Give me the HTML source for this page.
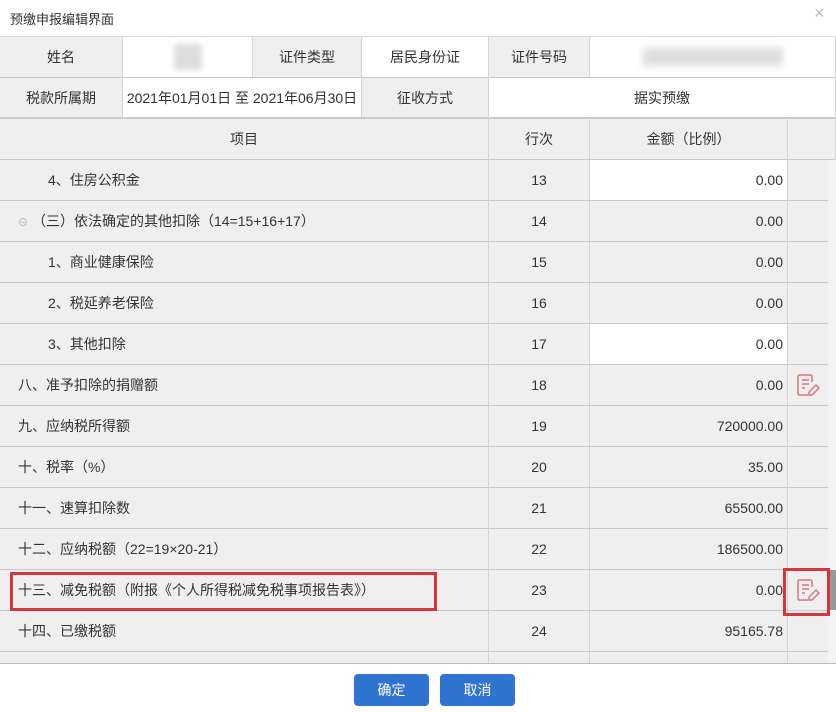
<!DOCTYPE html><html><head><meta charset="utf-8"><style>
body{margin:0;width:836px;height:712px;background:#fff;font-family:"Liberation Sans","Noto Sans CJK SC",sans-serif;font-size:14px;color:#333;position:relative;overflow:hidden}
.c{position:absolute;box-sizing:border-box;display:flex;align-items:center;justify-content:center;border-right:1px solid #d4d4d4;border-bottom:1px solid #c8c8c8;background:#efefef;white-space:nowrap}
.w{background:#fff}
.l{justify-content:flex-start}
.r{justify-content:flex-end;padding-right:4px}
.btn{position:absolute;top:674px;height:32px;width:75px;background:#2f74d0;color:#fff;border-radius:4px;display:flex;align-items:center;justify-content:center;font-size:14px}
.o{font-size:10px;color:#aaa;margin-right:4px}
</style></head><body>
<div style="position:absolute;left:10px;top:9px;font-size:13px">预缴申报编辑界面</div>
<div style="position:absolute;left:814px;top:3px;font-size:18px;color:#bbb">×</div>
<div style="position:absolute;left:0;top:36px;width:836px;border-top:1px solid #ddd"></div>
<div class="c" style="left:0;top:37px;width:123px;height:41px">姓名</div>
<div class="c w" style="left:123px;top:37px;width:130px;height:41px"><div style="width:28px;height:26px;background:#ddd;filter:blur(3px)"></div></div>
<div class="c" style="left:253px;top:37px;width:109px;height:41px">证件类型</div>
<div class="c w" style="left:362px;top:37px;width:127px;height:41px">居民身份证</div>
<div class="c" style="left:489px;top:37px;width:101px;height:41px">证件号码</div>
<div class="c w" style="left:590px;top:37px;width:246px;height:41px"><div style="width:140px;height:18px;background:#ddd;filter:blur(4px)"></div></div>
<div class="c" style="left:0;top:78px;width:123px;height:40px">税款所属期</div>
<div class="c w" style="left:123px;top:78px;width:239px;height:40px">2021年01月01日 至 2021年06月30日</div>
<div class="c" style="left:362px;top:78px;width:127px;height:40px">征收方式</div>
<div class="c w" style="left:489px;top:78px;width:347px;height:40px">据实预缴</div>
<div class="c" style="left:0;top:118px;width:489px;height:42px;border-top:1px solid #ccc">项目</div>
<div class="c" style="left:489px;top:118px;width:101px;height:42px;border-top:1px solid #ccc">行次</div>
<div class="c" style="left:590px;top:118px;width:198px;height:42px;border-top:1px solid #ccc">金额（比例）</div>
<div class="c" style="left:788px;top:118px;width:48px;height:42px;border-top:1px solid #ccc"></div>
<div id="rows"></div>
<script>
var d=[["4、住房公积金",13,"0.00",48,1],["<span class=o>⊖</span>（三）依法确定的其他扣除（14=15+16+17）",14,"0.00",18,0],["1、商业健康保险",15,"0.00",48,0],["2、税延养老保险",16,"0.00",48,0],["3、其他扣除",17,"0.00",48,1],["八、准予扣除的捐赠额",18,"0.00",18,0,1],["九、应纳税所得额",19,"720000.00",18,0],["十、税率（%）",20,"35.00",18,0],["十一、速算扣除数",21,"65500.00",18,0],["十二、应纳税额（22=19×20-21）",22,"186500.00",18,0],["十三、减免税额（附报《个人所得税减免税事项报告表》）",23,"0.00",18,0,1],["十四、已缴税额",24,"95165.78",18,0],["",'',"",18,0]];
var ic='<svg width="26" height="26" viewBox="0 0 26 26" fill="none" stroke="#d9777a" stroke-width="1.5"><path d="M17 10V4.5a1.5 1.5 0 0 0-1.5-1.5h-11A1.5 1.5 0 0 0 3 4.5v17A1.5 1.5 0 0 0 4.5 23H13M7 8h7M7 12h7M7 16h3"/><path d="M21 13l3 3-7 7h-3v-3z"/></svg>';
var h='';d.forEach(function(r,i){var t=160+i*41,hh=i==12?12:41;
h+='<div class="c l" style="left:0;top:'+t+'px;width:489px;height:'+hh+'px;padding-left:'+r[3]+'px">'+r[0]+'</div>';
h+='<div class="c" style="left:489px;top:'+t+'px;width:101px;height:'+hh+'px">'+r[1]+'</div>';
h+='<div class="c r'+(r[4]?' w':'')+'" style="left:590px;top:'+t+'px;width:198px;height:'+hh+'px">'+r[2]+'</div>';
h+='<div class="c" style="left:788px;top:'+t+'px;width:40px;height:'+hh+'px;border-right:0">'+(r[5]?ic:'')+'</div>';});
document.getElementById('rows').innerHTML=h;
</script>
<div style="position:absolute;left:828px;top:160px;width:8px;height:503px;background:#f4f4f4"></div>
<div style="position:absolute;left:830px;top:570px;width:6px;height:40px;background:#999"></div>
<div style="position:absolute;left:0;top:663px;width:836px;border-top:1px solid #bbb"></div>
<div style="position:absolute;left:10px;top:572px;width:427px;height:39px;border:3px solid #d9363a;box-sizing:border-box"></div>
<div style="position:absolute;left:783px;top:568px;width:47px;height:48px;border:3px solid #d9363a;box-sizing:border-box"></div>
<div class="btn" style="left:354px">确定</div>
<div class="btn" style="left:440px">取消</div>
</body></html>
